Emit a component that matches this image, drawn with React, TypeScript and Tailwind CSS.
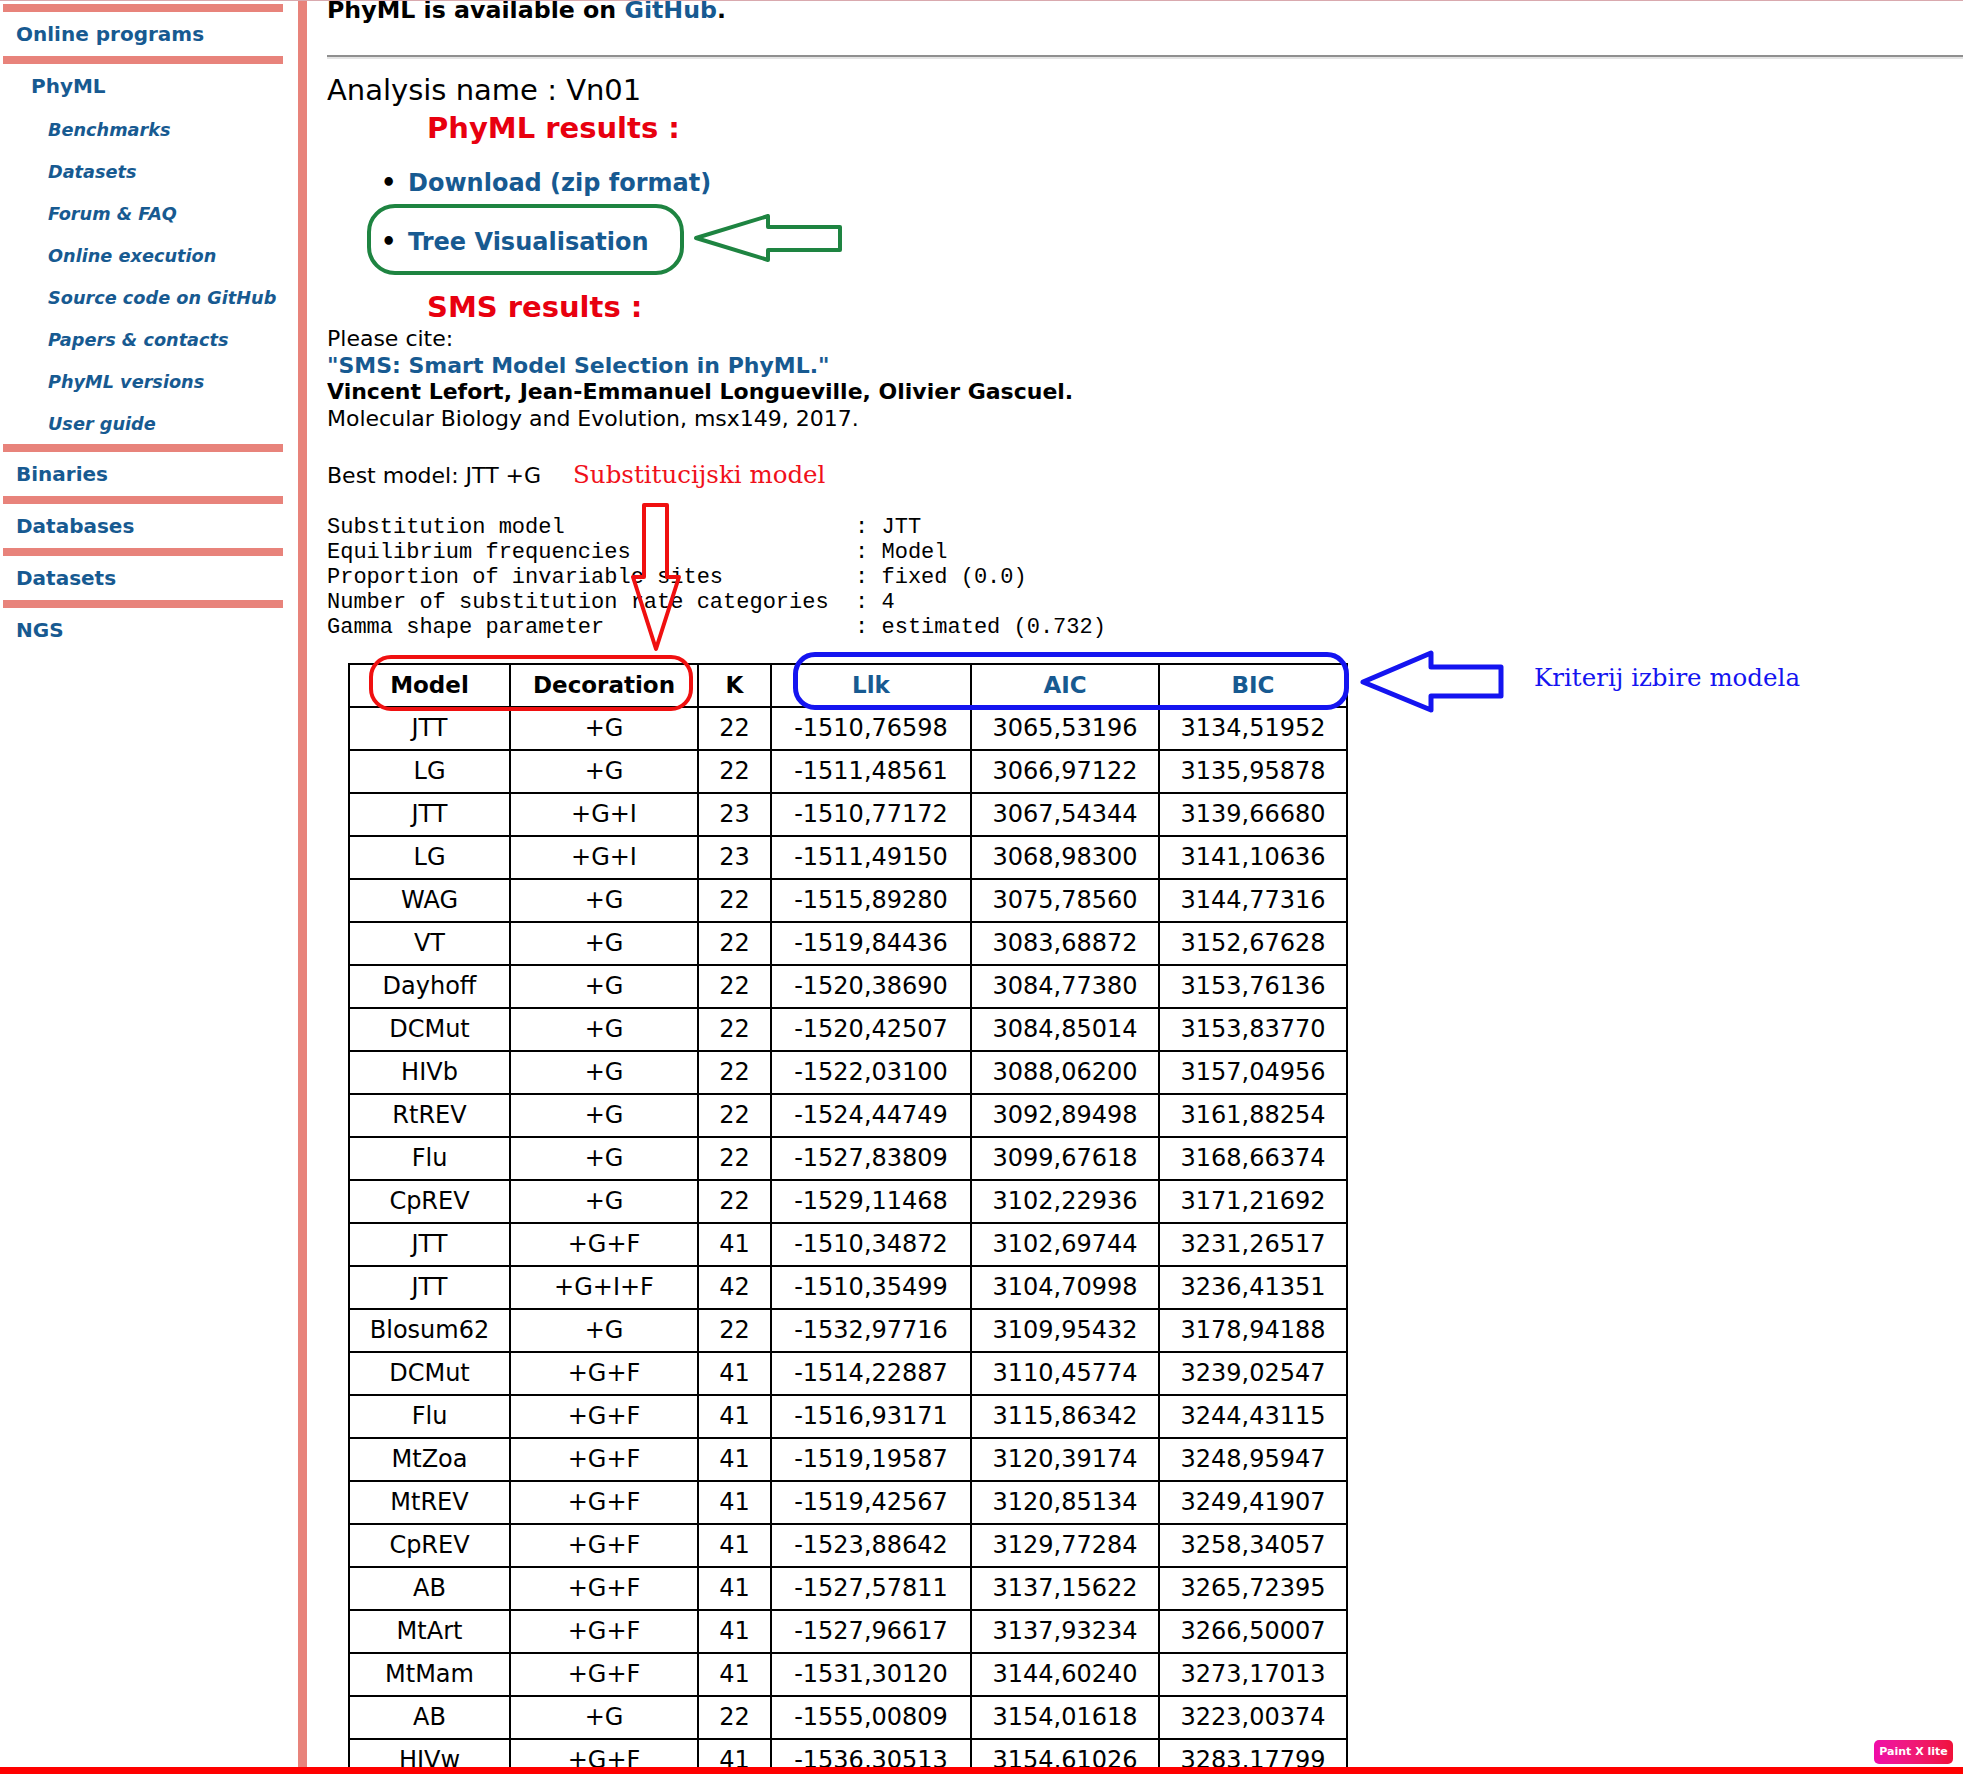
const verdana = { fontFamily: '"DejaVu Sans", Verdana, sans-serif' };

const rows: string[][] = [
  ['JTT', '+G', '22', '-1510,76598', '3065,53196', '3134,51952'],
  ['LG', '+G', '22', '-1511,48561', '3066,97122', '3135,95878'],
  ['JTT', '+G+I', '23', '-1510,77172', '3067,54344', '3139,66680'],
  ['LG', '+G+I', '23', '-1511,49150', '3068,98300', '3141,10636'],
  ['WAG', '+G', '22', '-1515,89280', '3075,78560', '3144,77316'],
  ['VT', '+G', '22', '-1519,84436', '3083,68872', '3152,67628'],
  ['Dayhoff', '+G', '22', '-1520,38690', '3084,77380', '3153,76136'],
  ['DCMut', '+G', '22', '-1520,42507', '3084,85014', '3153,83770'],
  ['HIVb', '+G', '22', '-1522,03100', '3088,06200', '3157,04956'],
  ['RtREV', '+G', '22', '-1524,44749', '3092,89498', '3161,88254'],
  ['Flu', '+G', '22', '-1527,83809', '3099,67618', '3168,66374'],
  ['CpREV', '+G', '22', '-1529,11468', '3102,22936', '3171,21692'],
  ['JTT', '+G+F', '41', '-1510,34872', '3102,69744', '3231,26517'],
  ['JTT', '+G+I+F', '42', '-1510,35499', '3104,70998', '3236,41351'],
  ['Blosum62', '+G', '22', '-1532,97716', '3109,95432', '3178,94188'],
  ['DCMut', '+G+F', '41', '-1514,22887', '3110,45774', '3239,02547'],
  ['Flu', '+G+F', '41', '-1516,93171', '3115,86342', '3244,43115'],
  ['MtZoa', '+G+F', '41', '-1519,19587', '3120,39174', '3248,95947'],
  ['MtREV', '+G+F', '41', '-1519,42567', '3120,85134', '3249,41907'],
  ['CpREV', '+G+F', '41', '-1523,88642', '3129,77284', '3258,34057'],
  ['AB', '+G+F', '41', '-1527,57811', '3137,15622', '3265,72395'],
  ['MtArt', '+G+F', '41', '-1527,96617', '3137,93234', '3266,50007'],
  ['MtMam', '+G+F', '41', '-1531,30120', '3144,60240', '3273,17013'],
  ['AB', '+G', '22', '-1555,00809', '3154,01618', '3223,00374'],
  ['HIVw', '+G+F', '41', '-1536,30513', '3154,61026', '3283,17799'],
];

const colWidths = ['w-[161px]', 'w-[188px]', 'w-[73px]', 'w-[200px]', 'w-[188px]', 'w-[188px]'];

const subLinks = [
  'Benchmarks',
  'Datasets',
  'Forum & FAQ',
  'Online execution',
  'Source code on GitHub',
  'Papers & contacts',
  'PhyML versions',
  'User guide',
];

const modelLines = [
  ['Substitution model', 'JTT'],
  ['Equilibrium frequencies', 'Model'],
  ['Proportion of invariable sites', 'fixed (0.0)'],
  ['Number of substitution rate categories', '4'],
  ['Gamma shape parameter', 'estimated (0.732)'],
];

function Bar() {
  return <div className="h-[8px] bg-[#e8837b]" />;
}

function Sidebar() {
  return (
    <div className="w-[298px] shrink-0 pt-[4px] pl-[3px]">
      <div className="w-[280px]">
        <Bar />
        <div className="h-[44px] flex items-center pl-[13px] text-[20px] font-bold text-[#175a91]">Online programs</div>
        <Bar />
        <div className="h-[44px] flex items-center pl-[28px] text-[20px] font-bold text-[#175a91]">PhyML</div>
        {subLinks.map((s) => (
          <div key={s} className="h-[42px] flex items-center pt-[2px] pl-[45px] text-[17.7px] font-bold italic text-[#175a91]">
            {s}
          </div>
        ))}
        {['Binaries', 'Databases', 'Datasets', 'NGS'].map((s) => (
          <div key={s}>
            <Bar />
            <div className="h-[44px] flex items-center pl-[13px] text-[20px] font-bold text-[#175a91]">{s}</div>
          </div>
        ))}
      </div>
    </div>
  );
}

function ResultsTable() {
  const head = ['Model', 'Decoration', 'K', 'Llk', 'AIC', 'BIC'];
  return (
    <table className="ml-[21px] border-collapse border-2 border-black table-fixed">
      <thead>
        <tr className="h-[43px]">
          {head.map((h, i) => (
            <th
              key={h}
              className={`${colWidths[i]} border-2 border-black text-center text-[23px] font-bold ${i > 2 ? 'text-[#175a91]' : 'text-black'}`}
            >
              {h}
            </th>
          ))}
        </tr>
      </thead>
      <tbody>
        {rows.map((r, ri) => (
          <tr key={ri} className="h-[43px]">
            {r.map((c, ci) => (
              <td key={ci} className="border-2 border-black text-center text-[24px] text-black p-0">
                {c}
              </td>
            ))}
          </tr>
        ))}
      </tbody>
    </table>
  );
}

function MainContent() {
  return (
    <div className="flex-1 pl-[20px] text-black min-w-0">
      <div className="mt-[-4px] text-[23.7px] leading-[28px] font-bold whitespace-nowrap">
        PhyML is available on <span className="text-[#175a91]">GitHub</span>.
      </div>
      <div className="mt-[31px] h-[4px] border-t-2 border-[#8f8f8f] border-b-2 border-b-[#e4e4e4]" />
      <div className="mt-[13px] text-[29px] leading-[36px]">Analysis name : Vn01</div>
      <div className="mt-[2px] ml-[100px] text-[29px] leading-[36px] font-bold text-[#e8000f]">PhyML results :</div>
      <div className="mt-[20px] h-[34px] flex items-center text-[24px] font-bold">
        <span className="w-[81px] pl-[54px] text-black">•</span>
        <span className="text-[#175a91]">Download (zip format)</span>
      </div>
      <div className="mt-[25px] h-[34px] flex items-center text-[24px] font-bold">
        <span className="w-[81px] pl-[54px] text-black">•</span>
        <span className="text-[#175a91]">Tree Visualisation</span>
      </div>
      <div className="mt-[30px] ml-[100px] text-[29px] leading-[36px] font-bold text-[#e8000f]">SMS results :</div>
      <div className="mt-[1px] text-[22px] leading-[26.7px]">
        <div>Please cite:</div>
        <div className="font-bold text-[#175a91]">"SMS: Smart Model Selection in PhyML."</div>
        <div className="font-bold">Vincent Lefort, Jean-Emmanuel Longueville, Olivier Gascuel.</div>
        <div>Molecular Biology and Evolution, msx149, 2017.</div>
      </div>
      <div className="mt-[28px] text-[22px] leading-[27px] whitespace-nowrap">
        Best model: JTT +G
        <span className="ml-[32px] text-[24.5px] text-[#f0101a]" style={{ fontFamily: '"DejaVu Serif", serif' }}>
          Substitucijski model
        </span>
      </div>
      <pre className="mt-[26px] text-[22px] leading-[25px]" style={{ fontFamily: '"Liberation Mono", monospace' }}>
        {modelLines.map(([k, v]) => k.padEnd(40, ' ') + ': ' + v).join('\n')}
      </pre>
      <div className="mt-[23px]">
        <ResultsTable />
      </div>
    </div>
  );
}

function Annotations() {
  return (
    <>
      {/* green */}
      <div className="absolute left-[367px] top-[204px] w-[317px] h-[71px] border-[4px] border-[#1e8441] rounded-[28px]" />
      <svg className="absolute left-0 top-0" width="1963" height="1774" fill="none">
        <polygon
          points="696,238 768,216 768,227 840,227 840,250 768,250 768,260"
          stroke="#1e8441"
          strokeWidth="4"
          strokeLinejoin="round"
        />
        <polygon
          points="644,505 667,505 667,577 679,577 656,649 633,577 644,577"
          stroke="#f01010"
          strokeWidth="4"
          strokeLinejoin="round"
        />
        <polygon
          points="1363,682 1431,653 1431,667 1501,667 1501,696 1431,696 1431,710"
          stroke="#1414f0"
          strokeWidth="5"
          strokeLinejoin="round"
        />
      </svg>
      {/* red box */}
      <div className="absolute left-[369px] top-[655px] w-[324px] h-[56px] border-[4px] border-[#f01010] rounded-[22px]" />
      {/* blue box */}
      <div className="absolute left-[793px] top-[652px] w-[556px] h-[58px] border-[5px] border-[#1414f0] rounded-[22px]" />
      <div
        className="absolute left-[1534px] top-[663px] text-[24.5px] leading-[30px] text-[#1414f0] whitespace-nowrap"
        style={{ fontFamily: '"DejaVu Serif", serif' }}
      >
        Kriterij izbire modela
      </div>
    </>
  );
}

export default function App() {
  return (
    <div className="relative w-[1963px] h-[1774px] overflow-hidden bg-white" style={verdana}>
      <div className="absolute left-0 top-0 w-full h-[1px] bg-[#d9a9ae]" />
      <div className="flex h-full">
        <Sidebar />
        <div className="w-[9px] shrink-0 bg-[#e8837b]" />
        <MainContent />
      </div>
      <Annotations />
      <div className="absolute left-[1874px] top-[1740px] w-[79px] h-[24px] rounded-[5px] bg-gradient-to-r from-[#f00aa8] to-[#f0103a] flex items-center justify-center text-[11px] font-bold text-white">
        Paint X lite
      </div>
      <div className="absolute left-0 bottom-0 w-full h-[7px] bg-[#ff0000]" />
    </div>
  );
}
